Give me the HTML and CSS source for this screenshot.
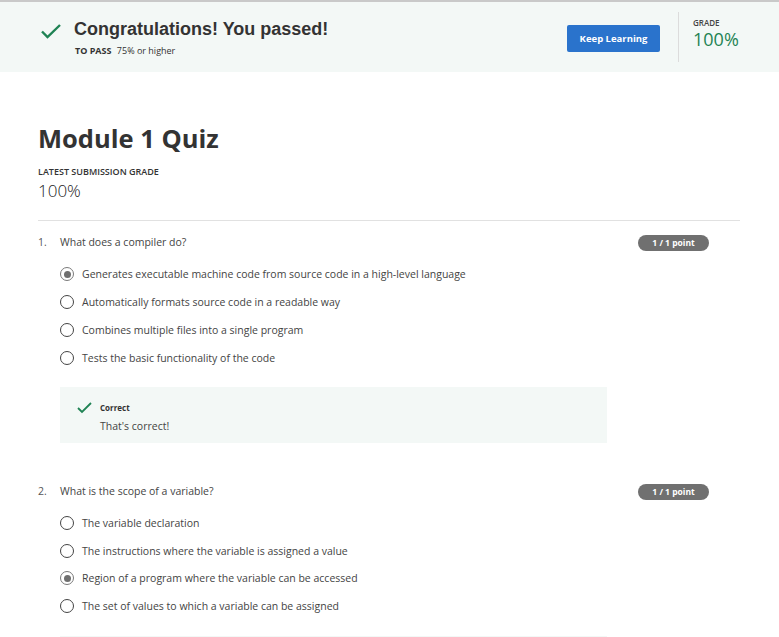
FILE: index.html
```html
<!DOCTYPE html>
<html lang="en">
<head>
<meta charset="utf-8">
<title>Module 1 Quiz</title>
<link rel="stylesheet" href="styles.css">
</head>
<body>
<header class="banner">
  <svg class="pass-check" width="20" height="15" viewBox="0 0 20 15"><path d="M1 7.5 L6.5 13 L19 1" fill="none" stroke="#1f8354" stroke-width="2.4"/></svg>
  <div class="pass-text">
    <h2 class="pass-title">Congratulations! You passed!</h2>
    <p class="pass-req"><b>TO PASS</b> 75% or higher</p>
  </div>
  <button class="keep">Keep Learning</button>
  <div class="divider"></div>
  <div class="grade">
    <div class="grade-label">GRADE</div>
    <div class="grade-value">100%</div>
  </div>
</header>
<main class="quiz">
  <h1 class="quiz-title">Module 1 Quiz</h1>
  <div class="sub-label">LATEST SUBMISSION GRADE</div>
  <div class="sub-grade">100%</div>
  <hr class="rule">

  <section class="question">
    <div class="q-head">
      <span class="q-num">1.</span>
      <span class="q-text">What does a compiler do?</span>
      <span class="pill">1 / 1 point</span>
    </div>
    <ul class="options">
      <li class="option"><span class="radio checked"></span>Generates executable machine code from source code in a high-level language</li>
      <li class="option"><span class="radio"></span>Automatically formats source code in a readable way</li>
      <li class="option"><span class="radio"></span>Combines multiple files into a single program</li>
      <li class="option"><span class="radio"></span>Tests the basic functionality of the code</li>
    </ul>
    <div class="feedback">
      <svg class="fb-check" width="15" height="12" viewBox="0 0 15 12"><path d="M1 6 L5 10 L14 1" fill="none" stroke="#1f8354" stroke-width="1.8"/></svg>
      <div class="fb-body">
        <div class="fb-title">Correct</div>
        <div class="fb-text">That's correct!</div>
      </div>
    </div>
  </section>

  <section class="question q2">
    <div class="q-head">
      <span class="q-num">2.</span>
      <span class="q-text">What is the scope of a variable?</span>
      <span class="pill">1 / 1 point</span>
    </div>
    <ul class="options">
      <li class="option"><span class="radio"></span>The variable declaration</li>
      <li class="option"><span class="radio"></span>The instructions where the variable is assigned a value</li>
      <li class="option"><span class="radio checked"></span>Region of a program where the variable can be accessed</li>
      <li class="option"><span class="radio"></span>The set of values to which a variable can be assigned</li>
    </ul>
    <div class="feedback">
      <svg class="fb-check" width="15" height="12" viewBox="0 0 15 12"><path d="M1 6 L5 10 L14 1" fill="none" stroke="#1f8354" stroke-width="1.8"/></svg>
      <div class="fb-body">
        <div class="fb-title">Correct</div>
        <div class="fb-text">That's correct!</div>
      </div>
    </div>
  </section>
</main>
</body>
</html>
```
FILE: styles.css
```css
* { box-sizing: border-box; }
html, body { margin: 0; padding: 0; background: #fff; }
body {
  font-family: "Open Sans", "Liberation Sans", Arial, sans-serif;
  color: #333;
}

/* banner */
.banner {
  display: flex;
  align-items: flex-start;
  height: 72px;
  border-top: 2px solid #c9c9c9;
  background: #f3f8f6;
  padding: 0 40px 0 41px;
}
.pass-check { margin-top: 22px; flex: none; }
.pass-text { margin-top: 15px; margin-left: 13px; }
.pass-title {
  margin: 0;
  font-family: "Liberation Sans", Arial, sans-serif;
  font-weight: 700;
  font-size: 18px;
  line-height: 24px;
  color: #333;
}
.pass-req {
  margin: 4px 0 0 1px;
  font-size: 9px;
  line-height: 12px;
  color: #333;
}
.pass-req b { font-weight: 700; margin-right: 3px; }
.keep {
  margin-left: auto;
  margin-top: 23px;
  width: 93px;
  height: 27px;
  border: none;
  border-radius: 2px;
  background: #2a73cc;
  color: #fff;
  font-family: "Open Sans", sans-serif;
  font-weight: 700;
  font-size: 9.5px;
  padding: 0;
}
.divider {
  margin-top: 10px;
  margin-left: 18px;
  width: 1px;
  height: 50px;
  background: #dcdcdc;
}
.grade { margin-top: 16px; margin-left: 14px; width: 46px; }
.grade-label {
  font-size: 8px;
  line-height: 10px;
  font-weight: 600;
  color: #444;
}
.grade-value {
  font-size: 18px;
  line-height: 22px;
  color: #1f8354;
}

/* main */
.quiz { padding: 0 39px 0 38px; }
.quiz-title {
  margin: 48px 0 0;
  font-size: 25.5px;
  line-height: 36px;
  font-weight: 700;
  color: #333;
}
.sub-label {
  margin-top: 10px;
  font-size: 9px;
  line-height: 12px;
  font-weight: 600;
  color: #333;
}
.sub-grade {
  margin-top: 2px;
  font-size: 17px;
  line-height: 22px;
  font-weight: 300;
  color: #222;
}
.rule {
  margin: 18px 0 0;
  border: none;
  border-top: 1px solid #e1e1e1;
}

.question { padding-right: 31px; margin-top: 13px; }
.q2 { margin-top: 40px; }
.q-head {
  display: flex;
  align-items: flex-start;
  font-size: 10.5px;
  line-height: 16px;
}
.q-num { width: 22px; color: #555; }
.q-text { flex: 1; color: #444; }
.pill {
  margin-top: 1px;
  width: 71px;
  height: 16px;
  border-radius: 8px;
  background: #707070;
  color: #fff;
  font-size: 8.5px;
  font-weight: 700;
  line-height: 16px;
  text-align: center;
}
.options {
  list-style: none;
  margin: 9px 0 0 22px;
  padding: 0;
}
.option {
  display: flex;
  align-items: center;
  gap: 8px;
  height: 28px;
  font-size: 10.5px;
  line-height: 16px;
  color: #444;
}
.q2 .option { height: 27.7px; }
.radio {
  flex: none;
  width: 14px;
  height: 14px;
  border: 1.5px solid #444;
  border-radius: 50%;
  display: flex;
  align-items: center;
  justify-content: center;
}
.radio.checked { border-color: #7a7a7a; }
.radio.checked::after {
  content: "";
  width: 7px;
  height: 7px;
  border-radius: 50%;
  background: #6f6f6f;
}

.feedback {
  display: flex;
  align-items: flex-start;
  margin: 15px 0 0 22px;
  width: 547px;
  height: 56px;
  background: #f3f8f6;
  padding: 15px 0 0 17px;
}
.fb-check { flex: none; margin-top: 0; }
.fb-body { margin-left: 8px; }
.fb-title {
  font-size: 8px;
  line-height: 12px;
  font-weight: 700;
  color: #333;
}
.fb-text {
  margin-top: 5px;
  font-size: 10.5px;
  line-height: 14px;
  color: #444;
}
.q2 .feedback { margin-top: 16px; }
```
